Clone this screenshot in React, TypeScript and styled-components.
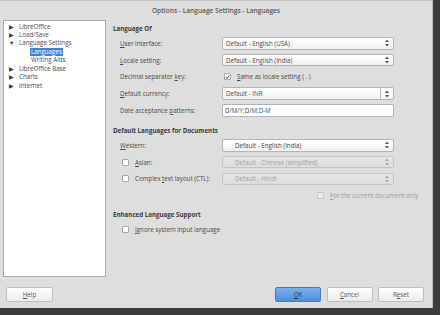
import React from "react";
import styled, { createGlobalStyle } from "styled-components";

const Global = createGlobalStyle`
  html, body { margin: 0; padding: 0; background: #3c3c3c; }
  * { box-sizing: border-box; }
`;

const Screen = styled.div`
  width: 440px;
  height: 315px;
  background: #3c3c3c;
  font-family: "Open Sans", "Noto Sans", sans-serif;
  font-size: 6.2px;
  color: #474747;
  overflow: hidden;
`;

const Dialog = styled.div`
  width: 433px;
  height: 308px;
  background: #dedede;
  border-right: 1px solid #bdbdbd;
  display: flex;
  flex-direction: column;
`;

const TitleBar = styled.div`
  height: 20px;
  display: flex;
  align-items: center;
  justify-content: center;
  font-size: 6.6px;
  font-weight: 600;
  color: #5a5a5a;
  border-top: 1px solid #c4c4c4;
`;

const Body = styled.div`
  height: 257px;
  display: flex;
`;

const Tree = styled.div`
  margin-left: 3px;
  width: 103px;
  height: 257px;
  background: #fff;
  border: 1px solid #a9a9a9;
  padding-top: 1.5px;
  display: flex;
  flex-direction: column;
`;

const TreeItem = styled.div<{ $level: number }>`
  height: 8.45px;
  line-height: 8.45px;
  display: flex;
  align-items: center;
  padding-left: ${(p) => (p.$level === 0 ? 5 : 26)}px;
  color: #4a4a4a;
  white-space: nowrap;
`;

const Arrow = styled.span`
  width: 9px;
  display: inline-flex;
  align-items: center;
  font-size: 5.5px;
  color: #333;
`;

const ItemText = styled.span<{ $selected?: boolean }>`
  background: ${(p) => (p.$selected ? "#3d80d6" : "transparent")};
  color: ${(p) => (p.$selected ? "#fff" : "#4a4a4a")};
  padding: 0 1px;
`;

const Content = styled.div`
  margin-left: 7px;
  width: 290px;
  display: flex;
  flex-direction: column;
`;

const Section = styled.div<{ $top: number }>`
  margin-top: ${(p) => p.$top}px;
  display: flex;
  flex-direction: column;
`;

const Heading = styled.div`
  height: 12px;
  line-height: 12px;
  font-weight: 700;
  color: #3a3a3a;
  white-space: nowrap;
`;

const Row = styled.div`
  height: 16.75px;
  display: grid;
  grid-template-columns: 109px 172px;
  align-items: center;
`;

const Label = styled.div<{ $indent?: number }>`
  padding-left: ${(p) => p.$indent ?? 7}px;
  display: flex;
  align-items: center;
  white-space: nowrap;
`;

const CheckLabel = styled.label<{ $disabled?: boolean; $pad?: number }>`
  display: flex;
  align-items: center;
  gap: 6px;
  padding-left: ${(p) => p.$pad ?? 0}px;
  white-space: nowrap;
  color: ${(p) => (p.$disabled ? "#9a9a9a" : "#474747")};
`;

const Box = styled.span<{ $disabled?: boolean }>`
  flex: 0 0 7px;
  width: 7px;
  height: 7px;
  background: ${(p) => (p.$disabled ? "#ececec" : "#fff")};
  border: 1px solid ${(p) => (p.$disabled ? "#c6c6c6" : "#a8a8a8")};
  border-radius: 1px;
  display: inline-flex;
  align-items: center;
  justify-content: center;
`;

const Mn = styled.span`
  text-decoration: underline;
  text-underline-offset: 1px;
  text-decoration-thickness: 0.5px;
`;

const Select = styled.div<{ $disabled?: boolean; $pad?: number }>`
  height: 12.5px;
  display: flex;
  align-items: center;
  padding-left: ${(p) => p.$pad ?? 3}px;
  background: ${(p) =>
    p.$disabled
      ? "linear-gradient(#e6e6e6, #dcdcdc)"
      : "linear-gradient(#ffffff, #f2f2f2)"};
  border: 1px solid ${(p) => (p.$disabled ? "#c4c4c4" : "#b3b3b3")};
  border-radius: 2px;
  color: ${(p) => (p.$disabled ? "#a0a0a0" : "#474747")};
  white-space: nowrap;
`;

const SelText = styled.span`
  flex: 1;
`;

const Spin = styled.span<{ $sep?: boolean }>`
  width: ${(p) => (p.$sep ? 13 : 12)}px;
  height: 100%;
  display: flex;
  align-items: center;
  justify-content: center;
  border-left: ${(p) => (p.$sep ? "1px solid #bcbcbc" : "none")};
`;

const Input = styled.div`
  height: 13px;
  display: flex;
  align-items: center;
  padding-left: 2px;
  background: #fff;
  border: 1px solid #b3b3b3;
  border-radius: 1px;
  color: #474747;
`;

const WideRow = styled.div`
  height: 16.75px;
  display: flex;
  align-items: center;
  padding-left: 204px;
`;

const Footer = styled.div`
  height: 31px;
  padding: 10px 8px 6px 6px;
  display: flex;
  align-items: flex-start;
`;

const Button = styled.div<{ $primary?: boolean; $w: number }>`
  width: ${(p) => p.$w}px;
  height: 15px;
  display: flex;
  align-items: center;
  justify-content: center;
  border-radius: 2px;
  border: 1px solid ${(p) => (p.$primary ? "#3f7ac4" : "#bdbdbd")};
  background: ${(p) =>
    p.$primary
      ? "linear-gradient(#78b0ec, #4f8fdc)"
      : "linear-gradient(#ffffff, #ececec)"};
  color: ${(p) => (p.$primary ? "#2b3b52" : "#555")};
`;

const Spacer = styled.div`
  flex: 1;
`;

const ButtonGroup = styled.div`
  display: flex;
  gap: 5.5px;
`;

const SpinIcon = ({ disabled }: { disabled?: boolean }) => (
  <svg width="4" height="8" viewBox="0 0 4 8">
    <path d="M0 3 L2 0.5 L4 3 Z" fill={disabled ? "#a8a8a8" : "#555"} />
    <path d="M0 5 L2 7.5 L4 5 Z" fill={disabled ? "#a8a8a8" : "#555"} />
  </svg>
);

const Check = () => (
  <svg width="6" height="6" viewBox="0 0 6 6">
    <path d="M0.8 3 L2.4 4.7 L5.3 1" fill="none" stroke="#444" strokeWidth="1" />
  </svg>
);

const tree: { t: string; level: number; arrow?: string; sel?: boolean }[] = [
  { t: "LibreOffice", level: 0, arrow: "▶" },
  { t: "Load/Save", level: 0, arrow: "▶" },
  { t: "Language Settings", level: 0, arrow: "▼" },
  { t: "Languages", level: 1, sel: true },
  { t: "Writing Aids", level: 1 },
  { t: "LibreOffice Base", level: 0, arrow: "▶" },
  { t: "Charts", level: 0, arrow: "▶" },
  { t: "Internet", level: 0, arrow: "▶" },
];

export default function App() {
  return (
    <Screen>
      <Global />
      <Dialog>
        <TitleBar>Options - Language Settings - Languages</TitleBar>
        <Body>
          <Tree>
            {tree.map((it) => (
              <TreeItem key={it.t} $level={it.level}>
                {it.level === 0 && <Arrow>{it.arrow}</Arrow>}
                <ItemText $selected={it.sel}>{it.t}</ItemText>
              </TreeItem>
            ))}
          </Tree>
          <Content>
            <Section $top={3}>
              <Heading>Language Of</Heading>
              <Row>
                <Label>
                  <span><Mn>U</Mn>ser interface:</span>
                </Label>
                <Select>
                  <SelText>Default - English (USA)</SelText>
                  <Spin><SpinIcon /></Spin>
                </Select>
              </Row>
              <Row>
                <Label>
                  <span><Mn>L</Mn>ocale setting:</span>
                </Label>
                <Select>
                  <SelText>Default - English (India)</SelText>
                  <Spin><SpinIcon /></Spin>
                </Select>
              </Row>
              <Row>
                <Label>
                  <span>Decimal separator <Mn>k</Mn>ey:</span>
                </Label>
                <CheckLabel $pad={2}>
                  <Box><Check /></Box>
                  <span><Mn>S</Mn>ame as locale setting ( . )</span>
                </CheckLabel>
              </Row>
              <Row>
                <Label>
                  <span><Mn>D</Mn>efault currency:</span>
                </Label>
                <Select>
                  <SelText>Default - INR</SelText>
                  <Spin $sep><SpinIcon /></Spin>
                </Select>
              </Row>
              <Row>
                <Label>
                  <span>Date acceptance <Mn>p</Mn>atterns:</span>
                </Label>
                <Input>D/M/Y;D/M;D-M</Input>
              </Row>
            </Section>
            <Section $top={6.25}>
              <Heading>Default Languages for Documents</Heading>
              <Row>
                <Label>
                  <span><Mn>W</Mn>estern:</span>
                </Label>
                <Select $pad={12}>
                  <SelText>Default - English (India)</SelText>
                  <Spin><SpinIcon /></Spin>
                </Select>
              </Row>
              <Row>
                <Label $indent={9}>
                  <CheckLabel>
                    <Box />
                    <span><Mn>A</Mn>sian:</span>
                  </CheckLabel>
                </Label>
                <Select $disabled $pad={12}>
                  <SelText>Default - Chinese (simplified)</SelText>
                  <Spin><SpinIcon disabled /></Spin>
                </Select>
              </Row>
              <Row>
                <Label $indent={9}>
                  <CheckLabel>
                    <Box />
                    <span>Complex <Mn>t</Mn>ext layout (CTL):</span>
                  </CheckLabel>
                </Label>
                <Select $disabled $pad={12}>
                  <SelText>Default - Hindi</SelText>
                  <Spin><SpinIcon disabled /></Spin>
                </Select>
              </Row>
              <WideRow>
                <CheckLabel $disabled>
                  <Box $disabled />
                  <span><Mn>F</Mn>or the current document only</span>
                </CheckLabel>
              </WideRow>
            </Section>
            <Section $top={5}>
              <Heading>Enhanced Language Support</Heading>
              <Row>
                <Label $indent={9}>
                  <CheckLabel>
                    <Box />
                    <span><Mn>I</Mn>gnore system input language</span>
                  </CheckLabel>
                </Label>
              </Row>
            </Section>
          </Content>
        </Body>
        <Footer>
          <Button $w={47}>
            <span><Mn>H</Mn>elp</span>
          </Button>
          <Spacer />
          <ButtonGroup>
            <Button $w={46} $primary>
              <span><Mn>O</Mn>K</span>
            </Button>
            <Button $w={46}>
              <span><Mn>C</Mn>ancel</span>
            </Button>
            <Button $w={46}>
              <span>R<Mn>e</Mn>set</span>
            </Button>
          </ButtonGroup>
        </Footer>
      </Dialog>
    </Screen>
  );
}
